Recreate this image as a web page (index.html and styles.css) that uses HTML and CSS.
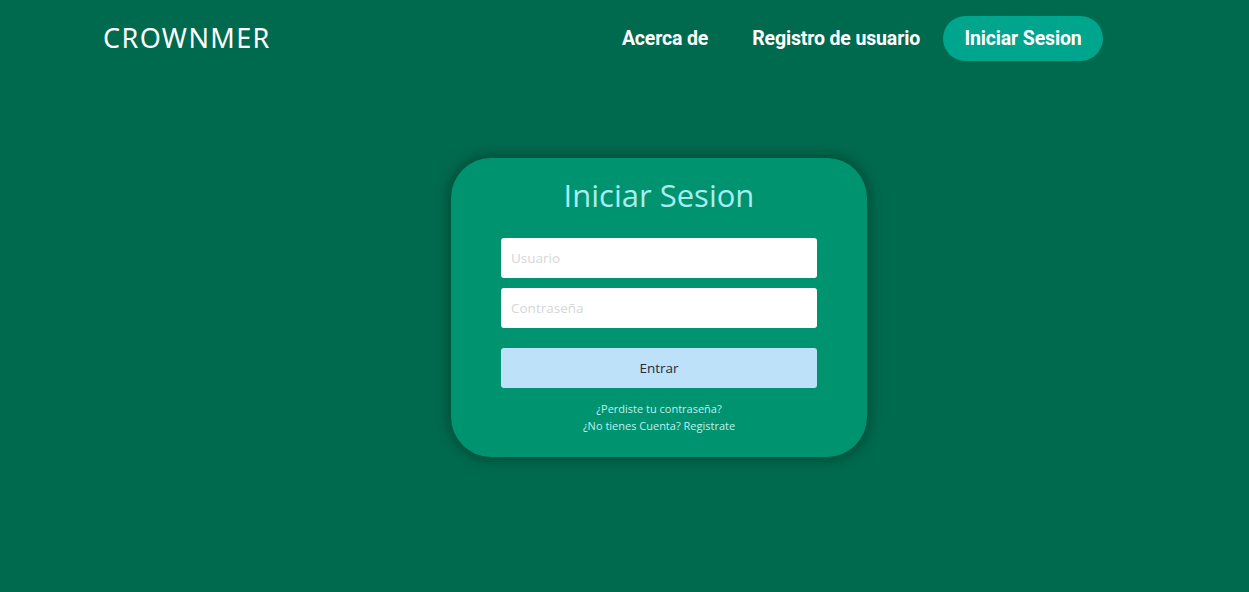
FILE: index.html
```html
<!DOCTYPE html>
<html lang="es">
<head>
<meta charset="utf-8">
<title>CROWNMER</title>
<link rel="stylesheet" href="styles.css">
</head>
<body>
<header class="topbar">
  <div class="brand">CROWNMER</div>
  <nav class="nav">
    <a class="nav-link" href="#">Acerca de</a>
    <a class="nav-link" href="#">Registro de usuario</a>
    <a class="nav-link nav-active" href="#">Iniciar Sesion</a>
  </nav>
</header>
<main class="main">
  <form class="card">
    <h1 class="card-title">Iniciar Sesion</h1>
    <input class="field" type="text" placeholder="Usuario">
    <input class="field" type="password" placeholder="Contraseña">
    <button class="submit" type="button">Entrar</button>
    <div class="links">
      <a href="#">¿Perdiste tu contraseña?</a>
      <a href="#">¿No tienes Cuenta? Registrate</a>
    </div>
  </form>
</main>
</body>
</html>
```

FILE: styles.css
```css
* { box-sizing: border-box; }
html, body { height: 100%; }
body {
  margin: 0;
  background: #006a4f;
  font-family: "Open Sans", "Noto Sans", sans-serif;
  color: #fff;
}
.topbar {
  display: flex;
  align-items: center;
  justify-content: space-between;
  padding: 16px 146px 0 103px;
  height: 61px;
}
.brand {
  font-family: "Noto Sans", sans-serif;
  font-size: 27px;
  letter-spacing: 1.4px;
  color: #fff;
  line-height: 45px;
  margin-top: -2px;
}
.nav {
  display: flex;
  align-items: center;
}
.nav-link {
  font-family: Roboto, sans-serif;
  font-weight: 700;
  font-size: 19.5px;
  color: #fff;
  text-decoration: none;
  letter-spacing: -0.15px;
  line-height: 45px;
  padding: 0 22px;
  border-radius: 23px;
}
.nav-active {
  background: #00a58d;
  width: 160px;
  text-align: center;
  padding: 0;
  margin-left: 1px;
}
.main {
  display: flex;
  justify-content: center;
  padding-top: 97px;
  padding-left: 69px;
}
.card {
  width: 416px;
  height: 299px;
  background: #009370;
  border-radius: 40px;
  box-shadow: 0 0 12px 4px rgba(0, 60, 40, 0.55);
  display: flex;
  flex-direction: column;
  align-items: center;
  padding-top: 17px;
}
.card-title {
  margin: 0;
  font-family: "Open Sans", sans-serif;
  font-weight: 400;
  font-size: 31px;
  line-height: 40px;
  color: #a8ecef;
  margin-bottom: 23px;
}
.field {
  width: 316px;
  height: 40px;
  border: none;
  border-radius: 3px;
  background: #fff;
  padding: 0 10px;
  font-family: "Open Sans", sans-serif;
  font-size: 13.5px;
  margin-bottom: 10px;
  outline: none;
}
.field::placeholder { color: #d6d6d6; }
.submit {
  margin-top: 10px;
  width: 316px;
  height: 40px;
  border: none;
  border-radius: 3px;
  background: #bde1f8;
  color: #2b2b3a;
  font-family: "Open Sans", sans-serif;
  font-size: 13.5px;
}
.links {
  display: flex;
  flex-direction: column;
  align-items: center;
  margin-top: 13px;
  gap: 1px;
}
.links a {
  font-family: "Open Sans", sans-serif;
  font-size: 11px;
  line-height: 16px;
  color: #bfeff0;
  text-decoration: none;
}
```
